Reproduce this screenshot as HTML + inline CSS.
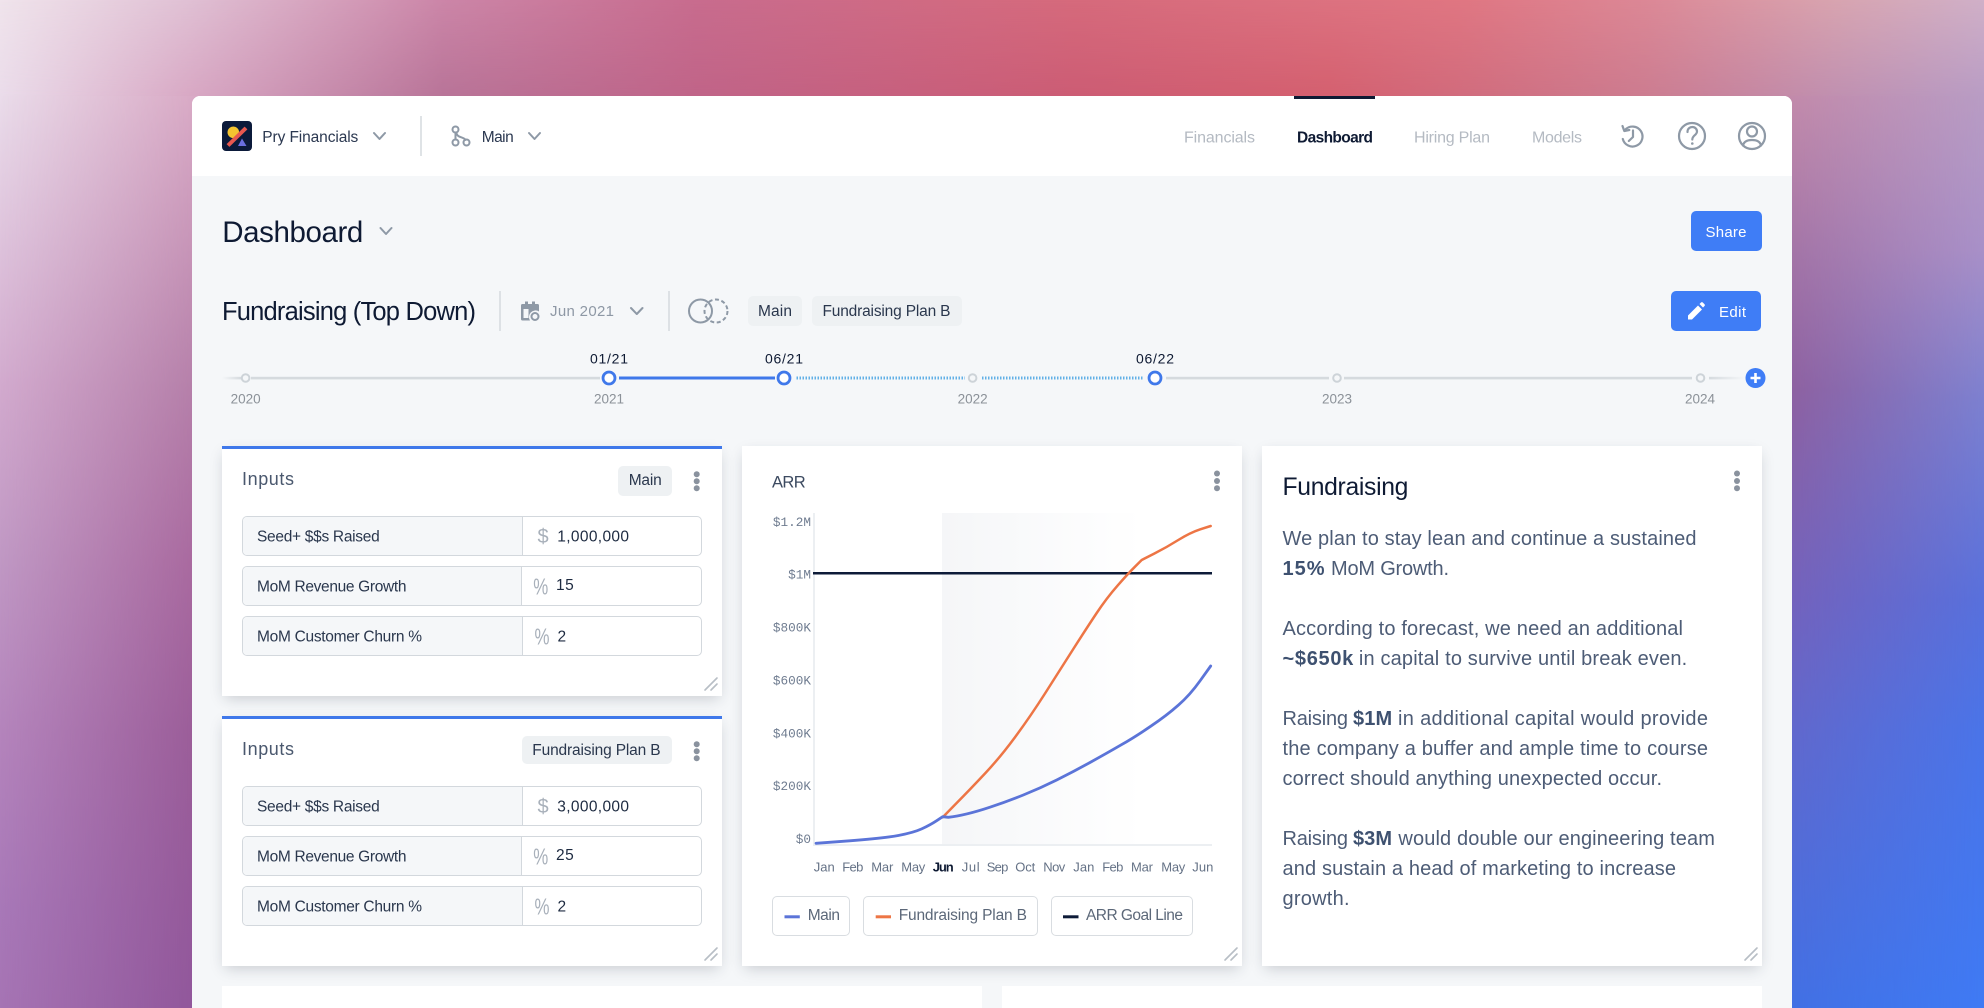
<!DOCTYPE html>
<html lang="en">
<head>
<meta charset="utf-8">
<title>Pry Financials Dashboard</title>
<style>
html,body{margin:0;padding:0;width:1984px;height:1008px;overflow:hidden;background:#b07ab0}
.a{position:absolute;box-sizing:border-box}
#top div,#left div,#right div{position:absolute;left:0;top:0;width:100%;height:100%}
#top{left:0;top:0;width:1984px;height:96px;position:absolute;
 background:linear-gradient(to right,#f0e4ec 0,#e0c0d4 190px,#cc86a8 443px,#c86c8e 696px,#d66a7c 1076px,#e07682 1456px,#dc8896 1645px,#d8a4b0 1835px,#d0b0c8 1984px)}
#top div{background:linear-gradient(to right,#eadcea 0,#d8a8c4 190px,#b87498 443px,#c06488 696px,#cc5c74 1076px,#d4606f 1330px,#cc7c90 1645px,#c090b0 1835px,#b89cc4 1984px);
 -webkit-mask-image:linear-gradient(to bottom,transparent,#000);mask-image:linear-gradient(to bottom,transparent,#000)}
#left{left:0;top:96px;width:200px;height:912px;position:absolute;
 background:linear-gradient(to bottom,#eadcea 0,#d2aace 291px,#c098c4 465px,#b484bc 639px,#a878b8 814px,#a674b4 912px)}
#left div{background:linear-gradient(to bottom,#d8a8c4 0,#b47ea8 291px,#a8689e 465px,#9a5c98 639px,#90569a 912px);
 -webkit-mask-image:linear-gradient(to right,transparent,#000);mask-image:linear-gradient(to right,transparent,#000)}
#right{left:1784px;top:96px;width:200px;height:912px;position:absolute;
 background:linear-gradient(to bottom,#c38aaa 0,#a474a6 154px,#8e60a0 294px,#7462bc 504px,#6268cc 634px,#4270e4 912px)}
#right div{background:linear-gradient(to bottom,#b89cc4 0,#a890c8 154px,#7c80d0 304px,#5870dc 504px,#4a74e8 634px,#3f7af4 912px);
 -webkit-mask-image:linear-gradient(to right,transparent,#000);mask-image:linear-gradient(to right,transparent,#000)}
#panel{left:192px;top:96px;width:1600px;height:912px;background:#f5f7f9;border-radius:8px 8px 0 0;overflow:hidden}
.card{background:#fff;box-shadow:0 5px 14px -3px rgba(30,40,60,.22)}
.blue{border-top:3px solid #3f78ea}
.chip{background:#eef1f3;border-radius:5px}
.row{left:242px;width:460px;height:40px;border:1.5px solid #d3d8dd;border-radius:5px;background:#fff;overflow:hidden}
.row i{position:absolute;left:0;top:0;bottom:0;background:#f5f7f9;border-right:1.5px solid #d3d8dd}
.btn{background:#3f7df6;border-radius:5px}
.leg{border:1.5px solid #d9dde1;border-radius:5px;background:#fff}
svg text{font-family:"Liberation Sans",sans-serif;white-space:pre}
.m{font-family:"Liberation Mono",monospace!important;font-size:12.7px;fill:#6f7c90;text-anchor:end}
.d{font-size:15.5px;fill:#2a374d}
.v{font-size:15.5px;fill:#1d2a40}
.s{fill:#a8b0ba}
.p{font-size:20px;fill:#4d5c76}
.pb{font-size:20px;fill:#3e5170;font-weight:700}
.mo{font-size:13px;fill:#657286}
.yr{font-size:13.5px;fill:#8b9198}
.dt{font-size:14px;fill:#0e1a33}
.nav{font-size:16px;fill:#b4bac2}
.leg-t{font-size:15.5px;fill:#5c6879}
.ic{fill:none;stroke:#8e99a6;stroke-linecap:round;stroke-linejoin:round}
.dot{fill:#8a929e}
.grip{stroke:#b8bec5;stroke-width:1.6;stroke-linecap:round}
</style>
</head>
<body>
<div id="top"><div></div></div>
<div id="left"><div></div></div>
<div id="right"><div></div></div>
<div class="a" id="panel">
  <div class="a" style="left:0;top:0;width:1600px;height:80px;background:#fff"></div>
</div>

<!-- header bits -->
<div class="a" style="left:420px;top:116px;width:2px;height:40px;background:#dfe3e6"></div>
<div class="a" style="left:1294px;top:96px;width:81px;height:3px;background:#0e1a33"></div>
<div class="a btn" style="left:1691px;top:211px;width:71px;height:40px"></div>
<div class="a" style="left:499px;top:291px;width:1.5px;height:40px;background:#dde1e5"></div>
<div class="a" style="left:668px;top:291px;width:1.5px;height:40px;background:#dde1e5"></div>
<div class="a chip" style="left:748px;top:296px;width:54px;height:30px"></div>
<div class="a chip" style="left:812px;top:296px;width:150px;height:30px"></div>
<div class="a btn" style="left:1671px;top:291px;width:90px;height:40px"></div>

<!-- inputs 1 -->
<div class="a card blue" style="left:222px;top:446px;width:500px;height:250px"></div>
<div class="a chip" style="left:618px;top:466px;width:54px;height:30px"></div>
<div class="a row" style="top:516px"><i style="width:279px"></i></div>
<div class="a row" style="top:566px"><i style="width:278px"></i></div>
<div class="a row" style="top:616px"><i style="width:279px"></i></div>
<!-- inputs 2 -->
<div class="a card blue" style="left:222px;top:716px;width:500px;height:250px"></div>
<div class="a chip" style="left:522px;top:736px;width:150px;height:28px"></div>
<div class="a row" style="top:786px"><i style="width:279px"></i></div>
<div class="a row" style="top:836px"><i style="width:278px"></i></div>
<div class="a row" style="top:886px"><i style="width:279px"></i></div>
<!-- ARR -->
<div class="a card" style="left:742px;top:446px;width:500px;height:520px"></div>
<div class="a" style="left:942px;top:513px;width:200px;height:331px;background:linear-gradient(to right,#f5f6f8,#fff)"></div>
<div class="a leg" style="left:772px;top:896px;width:78px;height:40px"></div>
<div class="a leg" style="left:863px;top:896px;width:175px;height:40px"></div>
<div class="a leg" style="left:1051px;top:896px;width:142px;height:40px"></div>
<!-- Fundraising -->
<div class="a card" style="left:1262px;top:446px;width:500px;height:520px"></div>
<!-- bottom -->
<div class="a" style="left:222px;top:986px;width:760px;height:22px;background:#fff"></div>
<div class="a" style="left:1002px;top:986px;width:760px;height:22px;background:#fff"></div>

<svg class="a" style="left:0;top:0" width="1984" height="1008" viewBox="0 0 1984 1008" xmlns="http://www.w3.org/2000/svg">
<defs>
  <linearGradient id="f1" x1="0" x2="1" y1="0" y2="0"><stop offset="0" stop-color="#d5dade" stop-opacity="0"/><stop offset="1" stop-color="#d5dade"/></linearGradient>
  <linearGradient id="f2" x1="0" x2="1" y1="0" y2="0"><stop offset="0" stop-color="#d5dade"/><stop offset="1" stop-color="#d5dade" stop-opacity="0"/></linearGradient>
</defs>

<!-- logo -->
<rect x="222" y="121" width="30" height="30" rx="4" fill="#0b1a3a"/>
<path d="M238 146L242 138.500L246.500 146Z" fill="#6a6fe0"/>
<circle cx="233.300" cy="132.300" r="5.800" fill="#f4c430"/>
<path d="M228 145.500L246 128" stroke="#e8584f" stroke-width="4"/>
<text x="262.300" y="142" font-size="15.500" fill="#2b3850" textLength="96">Pry Financials</text>
<path class="ic" stroke-width="2" d="M374 133L379.500 139L385 133"/>
<!-- branch -->
<g class="ic" stroke-width="2">
<circle cx="455.500" cy="129.500" r="3"/><circle cx="455.500" cy="142.500" r="3"/><circle cx="466.500" cy="142.500" r="3"/>
<path d="M455.500 132.500V139.500M456.500 133.500C458 138 463 136.500 465.500 139.800"/>
</g>
<text x="481.700" y="142" font-size="15.500" fill="#2b3850" textLength="32">Main</text>
<path class="ic" stroke-width="2" d="M529 133L534.500 139L540 133"/>

<!-- nav -->
<text class="nav" x="1184" y="142.500" textLength="71">Financials</text>
<text x="1297" y="142.500" font-size="15.500" font-weight="700" fill="#0e1a33" textLength="76">Dashboard</text>
<text class="nav" x="1414" y="142.500" textLength="76">Hiring Plan</text>
<text class="nav" x="1532" y="142.500" textLength="50">Models</text>
<g class="ic" stroke-width="2.200">
<path d="M1625.500 129.400A10 10 0 1 1 1622.800 139"/>
<path d="M1622.500 126L1624.300 131L1629.300 130"/>
<path d="M1633 130.500V137L1628.800 141"/>
<circle cx="1692" cy="136" r="13"/>
<path d="M1687.500 132C1687.500 128.500 1690 127 1692.300 127C1695 127 1697 129 1697 131.500C1697 135 1692.300 135.500 1692.300 139.500"/>
<circle cx="1752" cy="136" r="13"/>
<circle cx="1752" cy="131.500" r="5"/>
<path d="M1743 145.500C1744 141 1748 140 1752 140C1756 140 1760 141 1761 145.500"/>
</g>
<circle cx="1692.300" cy="143.500" r="1.300" fill="#8e99a6"/>

<!-- title -->
<text x="222.300" y="242" font-size="29.500" fill="#0e1a33" textLength="141">Dashboard</text>
<path class="ic" stroke-width="2" d="M380.500 228L386 234L391.500 228"/>
<text x="1705.500" y="237" font-size="15" fill="#fff" textLength="41">Share</text>

<text x="222" y="320" font-size="25.500" fill="#0e1a33" textLength="254">Fundraising (Top Down)</text>
<!-- calendar -->
<path d="M522.500 304H525V301.500H528V304H532V301.500H535V304H537.500C538.500 304 539 304.500 539 305.500V311.500A6.500 6.500 0 0 0 530 320.500H522.500C521.500 320.500 521 320 521 319V305.500C521 304.500 521.500 304 522.500 304ZM523.500 309V318H528.500V309Z" fill="#8e99a6"/>
<circle cx="535" cy="316.500" r="3.500" fill="none" stroke="#8e99a6" stroke-width="2"/>
<text x="550" y="316" font-size="15" fill="#8e98a5" textLength="64">Jun 2021</text>
<path class="ic" stroke-width="2" d="M631 308L636.800 314L642.500 308"/>
<!-- venn -->
<circle cx="700.500" cy="311" r="11.500" fill="none" stroke="#8e99a6" stroke-width="2"/>
<circle cx="716" cy="311" r="11.500" fill="none" stroke="#8e99a6" stroke-width="2" stroke-dasharray="4 2.600"/>
<text x="758" y="316" font-size="15.500" fill="#2a374d" textLength="34">Main</text>
<text x="822.500" y="316" font-size="15.500" fill="#2a374d" textLength="128">Fundraising Plan B</text>
<!-- pencil -->
<path d="M1688 319.500V315.500L1698 305.500L1702 309.500L1692 319.500ZM1699.500 304L1701 302.500C1701.500 302 1702.300 302 1702.800 302.500L1704.500 304.200C1705 304.700 1705 305.500 1704.500 306L1703 307.500Z" fill="#fff"/>
<text x="1719" y="317" font-size="15" fill="#fff" textLength="27">Edit</text>

<!-- timeline -->
<rect x="222" y="376.800" width="19" height="2.600" fill="url(#f1)"/>
<rect x="251" y="376.800" width="349" height="2.600" fill="#d5dade"/>
<rect x="619" y="376.500" width="156" height="3" fill="#3f78ea"/>
<path d="M796.500 378H965M982 378H1144" stroke="#62b0e6" stroke-width="3" stroke-dasharray="1.500 1.500"/>
<rect x="1166" y="376.800" width="163" height="2.600" fill="#d5dade"/>
<rect x="1344" y="376.800" width="348" height="2.600" fill="#d5dade"/>
<rect x="1709" y="376.800" width="36" height="2.600" fill="url(#f2)"/>
<g fill="#f5f7f9" stroke="#cdd3d8" stroke-width="2">
<circle cx="245.600" cy="378" r="3.800"/><circle cx="972.600" cy="378" r="3.800"/><circle cx="1337" cy="378" r="3.800"/><circle cx="1700.500" cy="378" r="3.800"/>
</g>
<g fill="#fff" stroke="#3f78ea" stroke-width="2.800">
<circle cx="609" cy="378" r="6"/><circle cx="784" cy="378" r="6"/><circle cx="1155" cy="378" r="6"/>
</g>
<circle cx="1755.500" cy="378" r="10" fill="#3f7df6"/>
<path d="M1755.500 373V383M1750.500 378H1760.500" stroke="#fff" stroke-width="2.600"/>
<text class="dt" x="590" y="363.500" textLength="38">01/21</text>
<text class="dt" x="765" y="363.500" textLength="38">06/21</text>
<text class="dt" x="1136" y="363.500" textLength="38">06/22</text>
<text class="yr" x="230.600" y="403.500" textLength="30">2020</text>
<text class="yr" x="594" y="403.500" textLength="30">2021</text>
<text class="yr" x="957.600" y="403.500" textLength="30">2022</text>
<text class="yr" x="1322" y="403.500" textLength="30">2023</text>
<text class="yr" x="1685" y="403.500" textLength="30">2024</text>

<!-- inputs 1 -->
<text x="242" y="485" font-size="18" fill="#4a586e" textLength="52">Inputs</text>
<text class="d" x="628.700" y="485" textLength="33">Main</text>
<circle class="dot" cx="696.700" cy="474.300" r="3"/><circle class="dot" cx="696.700" cy="481.200" r="3"/><circle class="dot" cx="696.700" cy="488.300" r="3"/>
<text class="d" x="257" y="541.700" textLength="122.700">Seed+ $$s Raised</text>
<text class="d" x="257" y="591.700" textLength="149.500">MoM Revenue Growth</text>
<text class="d" x="257" y="641.700" textLength="165">MoM Customer Churn %</text>
<text class="s" x="537.500" y="543" font-size="20" textLength="10.500">$</text>
<text class="v" x="557.300" y="541.700" textLength="71.700">1,000,000</text>
<text class="s" x="533.300" y="594.500" font-size="23" textLength="15" lengthAdjust="spacingAndGlyphs">%</text>
<text class="v" x="556" y="590" textLength="17.700">15</text>
<text class="s" x="534.500" y="644.500" font-size="23" textLength="15" lengthAdjust="spacingAndGlyphs">%</text>
<text class="v" x="557.500" y="641.700" textLength="8">2</text>
<path class="grip" d="M705 690L717 678M711 690L717 684"/>

<!-- inputs 2 -->
<text x="242" y="755" font-size="18" fill="#4a586e" textLength="52">Inputs</text>
<text class="d" x="532.300" y="755" textLength="128.300">Fundraising Plan B</text>
<circle class="dot" cx="696.700" cy="744.300" r="3"/><circle class="dot" cx="696.700" cy="751.200" r="3"/><circle class="dot" cx="696.700" cy="758.300" r="3"/>
<text class="d" x="257" y="811.700" textLength="122.700">Seed+ $$s Raised</text>
<text class="d" x="257" y="861.700" textLength="149.500">MoM Revenue Growth</text>
<text class="d" x="257" y="911.700" textLength="165">MoM Customer Churn %</text>
<text class="s" x="537.500" y="813" font-size="20" textLength="10.500">$</text>
<text class="v" x="557.300" y="811.700" textLength="71.700">3,000,000</text>
<text class="s" x="533.300" y="864.500" font-size="23" textLength="15" lengthAdjust="spacingAndGlyphs">%</text>
<text class="v" x="556" y="860" textLength="17.700">25</text>
<text class="s" x="534.500" y="914.500" font-size="23" textLength="15" lengthAdjust="spacingAndGlyphs">%</text>
<text class="v" x="557.500" y="911.700" textLength="8">2</text>
<path class="grip" d="M705 960L717 948M711 960L717 954"/>

<!-- ARR chart -->
<text x="772" y="487.700" font-size="16.500" fill="#3c4a60" textLength="33.700">ARR</text>
<circle class="dot" cx="1217" cy="473.500" r="3"/><circle class="dot" cx="1217" cy="481" r="3"/><circle class="dot" cx="1217" cy="488.300" r="3"/>
<path d="M814 513V845H1212" fill="none" stroke="#eceff2" stroke-width="2"/>
<text class="m" x="811" y="526">$1.2M</text>
<text class="m" x="811" y="578.300">$1M</text>
<text class="m" x="811" y="631.700">$800K</text>
<text class="m" x="811" y="684.300">$600K</text>
<text class="m" x="811" y="737.300">$400K</text>
<text class="m" x="811" y="790">$200K</text>
<text class="m" x="811" y="843">$0</text>
<path d="M813 573.300H1212" stroke="#0d1b38" stroke-width="2.500"/>
<path fill="none" stroke="#ed7545" stroke-width="2.500" stroke-linejoin="round" stroke-linecap="round" d="M942.700 817.300L956.300 803.400Q970 789.500 985 773.500Q1000 757.500 1015 737.200Q1030 717 1045 693.500Q1060 670 1073.300 649Q1086.700 628 1096.700 613Q1106.700 598 1117.500 585.700Q1128.300 573.300 1135 566.700L1141.700 560L1154.200 553.600Q1166.700 547.300 1178.300 540Q1190 532.700 1200.300 529.300L1210.700 526"/>
<path fill="none" stroke="#5b74d8" stroke-width="2.800" stroke-linejoin="round" stroke-linecap="round" d="M816 843.300L849.600 840.800Q883.300 838.300 898.300 835.500Q913.300 832.700 921.700 828.900Q930 825 936.300 820.900L942.700 816.700L948.300 817.300Q965 815.500 990 807.200Q1006.700 801.700 1023.300 795Q1040 788.300 1056.700 780Q1073.300 771.700 1090 762.500Q1106.700 753.300 1120.800 745.100Q1135 737 1150.800 726.200Q1166.700 715.500 1178.300 705.200Q1190 695 1200.300 680.500L1210.700 666"/>
<g class="mo">
<text x="813.700" y="871.300" textLength="21">Jan</text>
<text x="842.300" y="871.300" textLength="21">Feb</text>
<text x="871.300" y="871.300" textLength="22">Mar</text>
<text x="901.300" y="871.300" textLength="24">May</text>
<text x="932.700" y="871.300" textLength="21" style="fill:#0e1a33;font-weight:700">Jun</text>
<text x="961.700" y="871.300" textLength="18">Jul</text>
<text x="986.700" y="871.300" textLength="21.700">Sep</text>
<text x="1015.300" y="871.300" textLength="20">Oct</text>
<text x="1043.300" y="871.300" textLength="22">Nov</text>
<text x="1073.300" y="871.300" textLength="21">Jan</text>
<text x="1102.300" y="871.300" textLength="21">Feb</text>
<text x="1131" y="871.300" textLength="22">Mar</text>
<text x="1161.300" y="871.300" textLength="24">May</text>
<text x="1192.300" y="871.300" textLength="21">Jun</text>
</g>
<rect x="784.500" y="915.300" width="15.300" height="3" fill="#5b74d8"/>
<text class="leg-t" x="807.700" y="920" textLength="32.300">Main</text>
<rect x="875.700" y="915.300" width="15.300" height="3" fill="#ed7545"/>
<text class="leg-t" x="898.700" y="920" textLength="128.300">Fundraising Plan B</text>
<rect x="1063" y="915.300" width="15.500" height="3" fill="#0d1b38"/>
<text class="leg-t" x="1086" y="920" textLength="97">ARR Goal Line</text>
<path class="grip" d="M1225 960L1237 948M1231 960L1237 954"/>

<!-- Fundraising text -->
<text x="1282.500" y="495" font-size="24.700" fill="#0e1a33" textLength="125.900">Fundraising</text>
<circle class="dot" cx="1737" cy="473.500" r="3"/><circle class="dot" cx="1737" cy="481" r="3"/><circle class="dot" cx="1737" cy="488.300" r="3"/>
<text class="p" x="1282.500" y="545" textLength="414">We plan to stay lean and continue a sustained</text>
<text class="pb" x="1282.500" y="575" textLength="42.100">15%</text>
<text class="p" x="1331" y="575" textLength="118">MoM Growth.</text>
<text class="p" x="1282.500" y="635" textLength="400.500">According to forecast, we need an additional</text>
<text class="pb" x="1282.500" y="665" textLength="70.800">~$650k</text>
<text class="p" x="1358.900" y="665" textLength="328.300">in capital to survive until break even.</text>
<text class="p" x="1282.500" y="725" textLength="65.500">Raising</text>
<text class="pb" x="1353" y="725" textLength="39.200">$1M</text>
<text class="p" x="1398" y="725" textLength="310">in additional capital would provide</text>
<text class="p" x="1282.500" y="755" textLength="425.500">the company a buffer and ample time to course</text>
<text class="p" x="1282.500" y="785" textLength="379.500">correct should anything unexpected occur.</text>
<text class="p" x="1282.500" y="845" textLength="65.500">Raising</text>
<text class="pb" x="1353" y="845" textLength="39">$3M</text>
<text class="p" x="1398.400" y="845" textLength="316.500">would double our engineering team</text>
<text class="p" x="1282.500" y="875" textLength="393.500">and sustain a head of marketing to increase</text>
<text class="p" x="1282.500" y="905" textLength="67">growth.</text>
<path class="grip" d="M1745 960L1757 948M1751 960L1757 954"/>
</svg>
</body>
</html>
